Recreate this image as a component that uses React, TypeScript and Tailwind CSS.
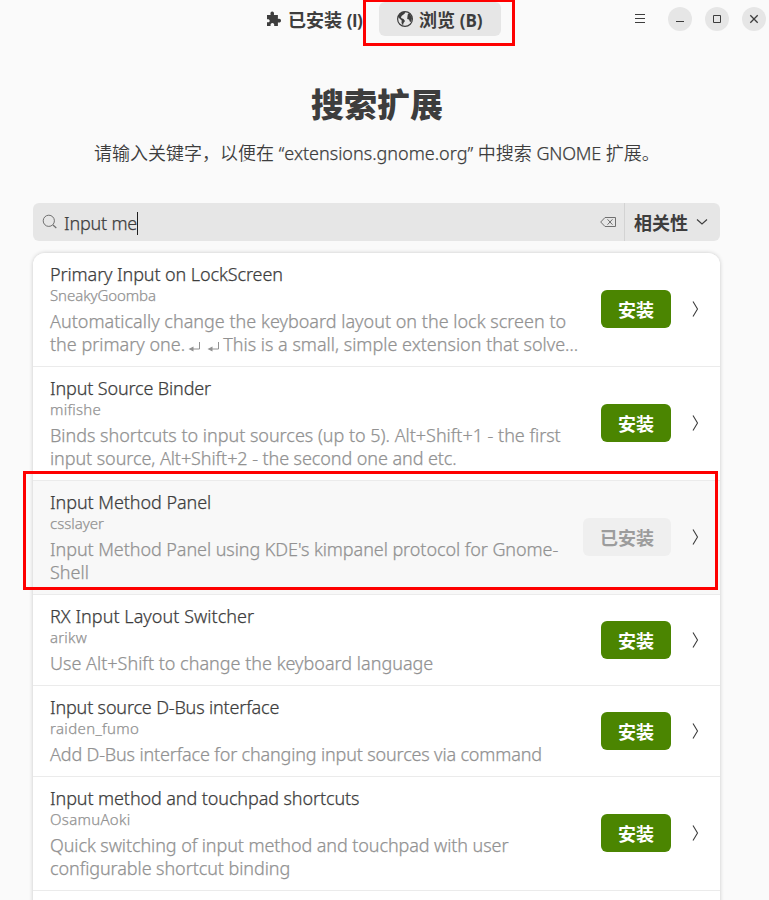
import type { ReactNode } from "react";

type Line = { text: ReactNode; tracking?: string };
type Extension = {
  name: string;
  nameTracking?: string;
  author: string;
  authorTracking?: string;
  lines: Line[];
  installed?: boolean;
};

function ReturnMark() {
  return (
    <svg width="13" height="12" viewBox="0 0 13 12" className="mr-[3px] ml-[3px] inline-block align-[-2px]">
      <path d="M11.5 1v7H4" fill="none" stroke="#929292" />
      <path d="M0.5 8l5-2.5v5z" fill="#929292" />
    </svg>
  );
}

const extensions: Extension[] = [
  {
    name: "Primary Input on LockScreen",
    nameTracking: "tracking-[-0.1px]",
    author: "SneakyGoomba",
    authorTracking: "tracking-[-0.08px]",
    lines: [
      { text: "Automatically change the keyboard layout on the lock screen to", tracking: "tracking-[0.01px]" },
      {
        text: (
          <>
            the primary one.
            <ReturnMark />
            <ReturnMark />
            This is a small, simple extension that solve…
          </>
        ),
      },
    ],
  },
  {
    name: "Input Source Binder",
    nameTracking: "tracking-[-0.15px]",
    author: "mifishe",
    authorTracking: "tracking-[0.25px]",
    lines: [
      { text: "Binds shortcuts to input sources (up to 5). Alt+Shift+1 - the first", tracking: "tracking-[-0.02px]" },
      { text: "input source, Alt+Shift+2 - the second one and etc.", tracking: "tracking-[-0.08px]" },
    ],
  },
  {
    name: "Input Method Panel",
    nameTracking: "tracking-[-0.06px]",
    author: "csslayer",
    lines: [
      { text: "Input Method Panel using KDE's kimpanel protocol for Gnome-", tracking: "tracking-[-0.07px]" },
      { text: "Shell" },
    ],
    installed: true,
  },
  {
    name: "RX Input Layout Switcher",
    nameTracking: "tracking-[0.04px]",
    author: "arikw",
    authorTracking: "tracking-[0.2px]",
    lines: [{ text: "Use Alt+Shift to change the keyboard language" }],
  },
  {
    name: "Input source D-Bus interface",
    nameTracking: "tracking-[-0.17px]",
    author: "raiden_fumo",
    authorTracking: "tracking-[0.35px]",
    lines: [
      { text: "Add D-Bus interface for changing input sources via command", tracking: "tracking-[-0.16px]" },
    ],
  },
  {
    name: "Input method and touchpad shortcuts",
    nameTracking: "tracking-[-0.1px]",
    author: "OsamuAoki",
    authorTracking: "tracking-[0.3px]",
    lines: [
      { text: "Quick switching of input method and touchpad with user", tracking: "tracking-[-0.09px]" },
      { text: "configurable shortcut binding", tracking: "tracking-[-0.08px]" },
    ],
  },
];

function Row({ ext }: { ext: Extension }) {
  return (
    <div
      className={`flex items-center border-b border-[#ebebeb] py-2.5 pr-5 pl-[17px] ${ext.installed ? "bg-[#f8f8f8]" : "bg-white"}`}
    >
      <div className="min-w-0 flex-1 whitespace-nowrap [-webkit-text-stroke:0.25px]">
        <div className="h-[23px] text-lg leading-[23px] text-[#3d3d3d]">
          <span className={ext.nameTracking}>{ext.name}</span>
        </div>
        <div className="-mt-px h-5 text-[15px] leading-5 text-[#929292]">
          <span className={ext.authorTracking}>{ext.author}</span>
        </div>
        <div className="mt-[5px] text-lg leading-[23px] text-[#929292]">
          {ext.lines.map((line, i) => (
            <div key={i} className="h-[23px]">
              <span className={line.tracking}>{line.text}</span>
            </div>
          ))}
        </div>
      </div>
      <button
        className={`mb-px h-[38px] shrink-0 rounded-md text-lg leading-[40px] font-bold ${ext.installed ? "w-[88px] bg-[#efefef] text-[#9c9c9c]" : "w-[70px] bg-[#4b8501] text-white"}`}
      >
        {ext.installed ? "已安装" : "安装"}
      </button>
      <svg width="9" height="18" viewBox="0 0 9 18" className="mb-px ml-5 shrink-0">
        <path d="M2 1.500L6.500 9 2 16.500" fill="none" stroke="#3d3d3d" strokeWidth="1.1" />
      </svg>
    </div>
  );
}

function Header() {
  return (
    <header className="flex h-[38px] items-center text-lg font-bold text-[#3d3d3d]">
      <div className="ml-[265px] flex w-[102px] items-center gap-1.5 whitespace-nowrap">
        <svg width="17" height="18" viewBox="0 0 17 18" className="shrink-0" fill="#3d3d3d">
          <path d="M2 5h3.6C5 2.500 6 1.500 7.200 1.500S9.500 2.500 8.900 5h4v4c2.300-.6 3.100.5 3.100 1.700s-1 2.200-3.100 1.700V16H9.200c.4-2-.6-2.900-1.800-2.900s-2.200.9-1.800 2.900H2v-3.700c2 .3 2.700-.6 2.700-1.600S3.800 8.900 2 9.200z" />
        </svg>
        <span className="pt-0.5 font-['Open_Sans','Noto_Sans_CJK_SC',sans-serif]">
          已安装 <span className="text-[17px] tracking-[-0.5px]">(I)</span>
        </span>
      </div>
      <div className="mt-0.5 ml-3 flex h-[34px] w-[122px] items-center gap-[5px] self-start rounded-md bg-[#e6e6e6] pl-[17px]">
        <svg width="18" height="18" viewBox="0 0 18 18" className="shrink-0">
          <circle cx="9" cy="9" r="7.400" fill="none" stroke="#3d3d3d" strokeWidth="1.200" />
          <path d="M2 6.500L4.500 3 8 1.500l1.500 1.300L7.500 4.500 5.500 6 5 8l2.500 1L9 11l-1.500 2-.5 2.500L5.500 13l.2-2.500L3.500 8.500z M12 3.500l2 .5 2 4-.7 3.500-1.300.5-1-2.500-1.800-.5.3-3z" fill="#3d3d3d" />
        </svg>
        <span className="pt-0.5 font-['Open_Sans','Noto_Sans_CJK_SC',sans-serif] whitespace-nowrap">
          浏览 <span className="text-[17px]">(B)</span>
        </span>
      </div>
      <svg width="12" height="12" viewBox="0 0 12 12" className="ml-[133px]">
        <path d="M1 1.500h10M1 5.500h10M1 9.500h10" stroke="#3d3d3d" />
      </svg>
      <div className="ml-[22px] flex gap-[13px]">
        <svg width="24" height="24" viewBox="0 0 24 24">
          <circle cx="12" cy="12" r="12" fill="#e6e6e6" />
          <path d="M8 14.500h8" stroke="#3d3d3d" />
        </svg>
        <svg width="24" height="24" viewBox="0 0 24 24">
          <circle cx="12" cy="12" r="12" fill="#e6e6e6" />
          <path d="M8.500 8.500h7v7h-7z" fill="none" stroke="#3d3d3d" />
        </svg>
        <svg width="24" height="24" viewBox="0 0 24 24">
          <circle cx="12" cy="12" r="12" fill="#e6e6e6" />
          <path d="M8.300 8.300l7.400 7.400M15.700 8.300l-7.400 7.400" stroke="#3d3d3d" strokeWidth="1.300" />
        </svg>
      </div>
    </header>
  );
}

function SearchBar() {
  return (
    <div className="mt-[38px] ml-[33px] flex h-[38px] w-[687px] items-center rounded-md bg-[#e6e6e6] text-[#3d3d3d]">
      <svg width="16" height="16" viewBox="0 0 16 16" className="ml-[9px] shrink-0">
        <circle cx="6.800" cy="6.800" r="5.600" fill="none" stroke="#707070" />
        <path d="M11 11l3.300 3" stroke="#707070" strokeWidth="1.200" />
      </svg>
      <span className="ml-1.5 pt-0.5 text-lg leading-[36px] tracking-[-0.2px] whitespace-nowrap [-webkit-text-stroke:0.25px]">
        Input me
      </span>
      <span className="mt-0.5 h-[23px] w-px bg-[#202020]" />
      <svg width="16" height="12" viewBox="0 0 16 12" className="mr-2 ml-auto">
        <path d="M5 1.500h10.500v9H5L.7 6zM7.500 3.300l5 5.400M12.500 3.300l-5 5.400" fill="none" stroke="#707070" />
      </svg>
      <div className="flex h-full w-24 items-center border-l border-[#d3d3d3] pl-[9px]">
        <span className="pt-0.5 text-lg font-bold whitespace-nowrap">相关性</span>
        <svg width="12" height="8" viewBox="0 0 12 8" className="ml-2">
          <path d="M1 1.500l5 4.500 5-4.500" fill="none" stroke="#3d3d3d" strokeWidth="1.100" />
        </svg>
      </div>
    </div>
  );
}

export default function App() {
  return (
    <div className="relative h-[900px] w-[769px] overflow-hidden bg-[#fafafa] font-['Noto_Sans','Noto_Sans_CJK_SC',sans-serif] font-[350]">
      <Header />
      <h1 className="mt-[42px] h-[50px] w-[754px] text-center text-[33px] leading-[50px] font-black text-[#3d3d3d]">搜索扩展</h1>
      <p className="mt-[11px] h-6 pl-[94px] text-lg leading-6 whitespace-nowrap text-[#3d3d3d]">
        请输入关键字，以便在{" "}
        <span className="[-webkit-text-stroke:0.25px]">“extensions.gnome.org”</span> 中搜索{" "}
        <span className="tracking-[-0.2px] [-webkit-text-stroke:0.25px]">GNOME</span> 扩展。
      </p>
      <SearchBar />
      <main className="mt-3 ml-[33px] w-[687px] overflow-hidden rounded-t-xl bg-white shadow-[0_0_4px_rgba(0,0,0,0.2)]">
        {extensions.map((ext) => (
          <Row key={ext.name} ext={ext} />
        ))}
        <div className="h-10" />
      </main>
      <div className="absolute top-[-1px] left-[363px] h-[47px] w-[152px] border-[3px] border-[#fe0000]" />
      <div className="absolute top-[471px] left-[23px] h-[119px] w-[695px] border-[3px] border-[#fe0000]" />
    </div>
  );
}
